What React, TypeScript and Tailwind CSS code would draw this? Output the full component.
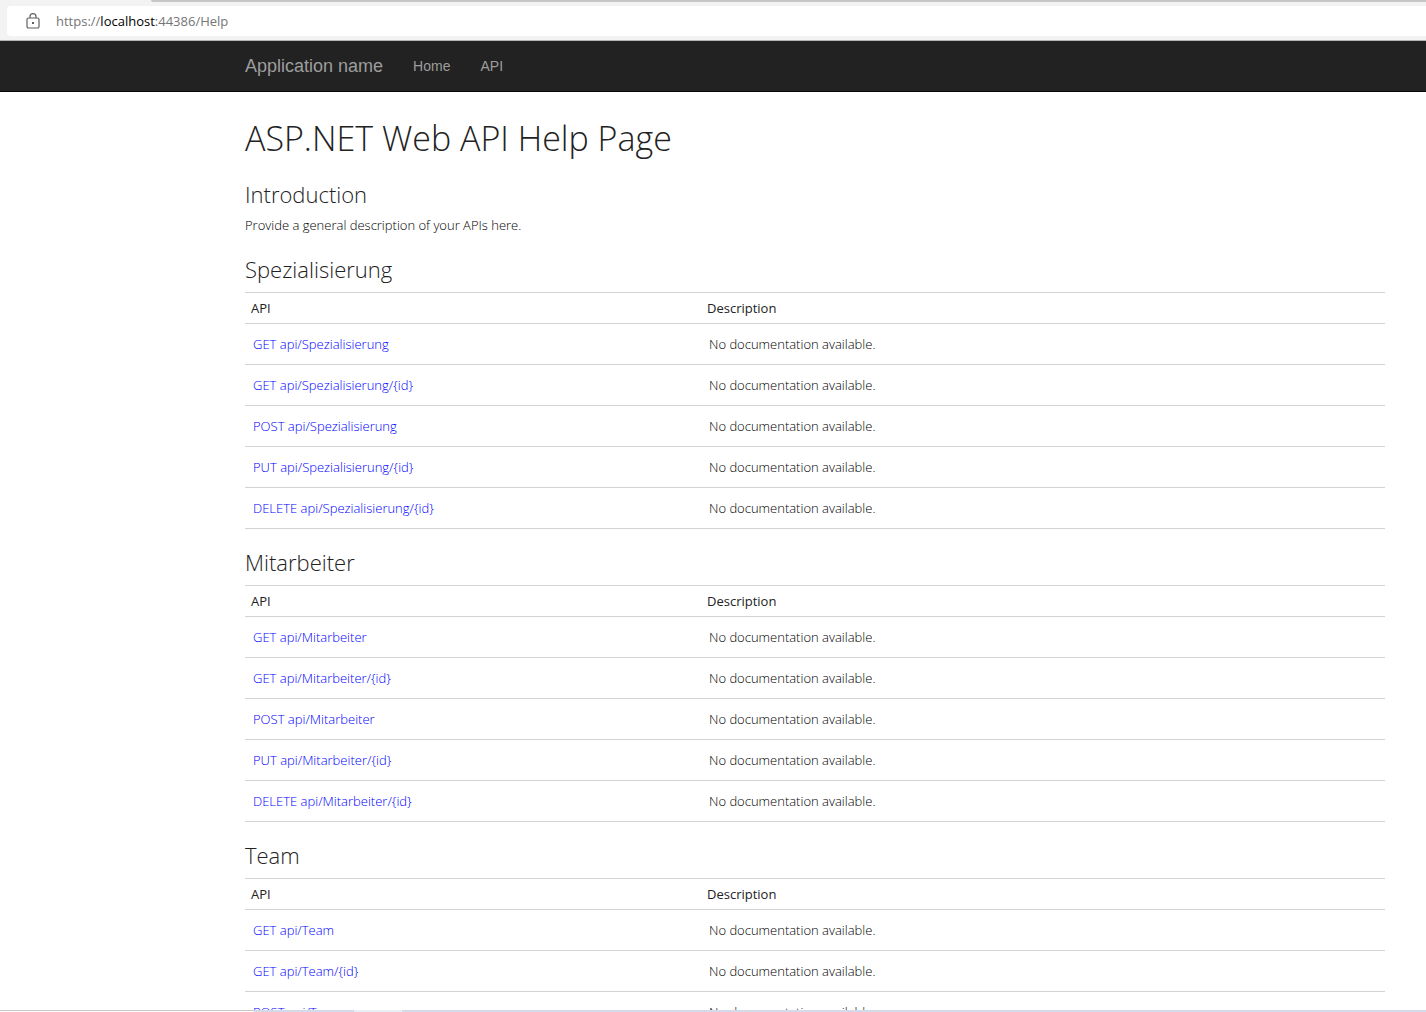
import React from "react";

type ApiGroup = { name: string; slug: string };

const groups: ApiGroup[] = [
  { name: "Spezialisierung", slug: "api/Spezialisierung" },
  { name: "Mitarbeiter", slug: "api/Mitarbeiter" },
  { name: "Team", slug: "api/Team" },
];

function endpoints(slug: string): string[] {
  return [
    `GET ${slug}`,
    `GET ${slug}/{id}`,
    `POST ${slug}`,
    `PUT ${slug}/{id}`,
    `DELETE ${slug}/{id}`,
  ];
}

function LockIcon() {
  return (
    <svg width="14" height="16" viewBox="0 0 14 16" fill="none" stroke="#5f5f5f" strokeWidth="1.2" aria-hidden="true">
      <rect x="1" y="5" width="12" height="10" rx="1.6" />
      <path d="M4 5V3.6a3 3 0 0 1 6 0V5" />
      <rect x="6" y="9" width="2" height="2" fill="#5f5f5f" stroke="none" />
    </svg>
  );
}

function BrowserBar() {
  return (
    <div className="shrink-0 border-b border-[#b4b4b4] bg-[#f3f3f3]">
      <div className="flex h-[6px] items-start">
        <div className="w-[151px]" />
        <div className="h-[2px] flex-1 rounded-bl-sm bg-[#c6c6c6]" />
      </div>
      <div className="mb-1 ml-[7px] flex h-[30px] items-center rounded-l bg-white pl-[19px]">
        <LockIcon />
        <div className="ml-4 text-[13px] leading-5 text-[#757575]">
          https://<span className="text-black">localhost</span>:44386/Help
        </div>
      </div>
    </div>
  );
}

function ApiTable({ group }: { group: ApiGroup }) {
  return (
    <section>
      <h2 className="mt-[20px] mb-[10px] text-[22px] leading-[26px] font-light">{group.name}</h2>
      <table className="w-full table-fixed border-collapse border-y border-[#d3d3d3] text-left text-[13px] leading-5">
        <thead>
          <tr>
            <th className="w-2/5 px-[6px] py-[5px] font-normal">API</th>
            <th className="px-[6px] py-[5px] font-normal">Description</th>
          </tr>
        </thead>
        <tbody>
          {endpoints(group.slug).map((e) => (
            <tr key={e} className="border-t border-[#d3d3d3]">
              <td className="px-2 py-[10px] font-light">
                <a href="#" className="text-[#0000ff]">{e}</a>
              </td>
              <td className="px-2 py-[10px] font-light text-black">No documentation available.</td>
            </tr>
          ))}
        </tbody>
      </table>
    </section>
  );
}

export default function App() {
  return (
    <div className="flex h-screen flex-col bg-white font-['Open_Sans',sans-serif] text-[#222222]">
      <BrowserBar />
      <nav className="flex h-[51px] shrink-0 items-center border-b border-[#080808] bg-[#222222] pl-[245px] font-['Liberation_Sans',Arial,sans-serif] text-[14px] leading-5 text-[#9d9d9d]">
        <a href="#" className="text-[18px]">Application name</a>
        <a href="#" className="ml-[30px]">Home</a>
        <a href="#" className="ml-[30px]">API</a>
      </nav>
      <main className="min-h-0 flex-1 overflow-y-auto pr-[41px] pl-[245px] [scrollbar-width:none]">
        <h1 className="mt-[26px] text-[34px] leading-[40px] font-light">ASP.NET Web API Help Page</h1>
        <h2 className="mt-[23px] mb-[8px] text-[22px] leading-[26px] font-light">Introduction</h2>
        <p className="mb-[21px] text-[13px] leading-5 font-light text-black">Provide a general description of your APIs here.</p>
        {groups.map((g) => (
          <ApiTable key={g.name} group={g} />
        ))}
      </main>
      <div className="flex h-[2px] shrink-0">
        <div className="w-[254px] border-t border-[#c8c8c8]" />
        <div className="w-[100px] bg-[#d3daea]" />
        <div className="w-[48px] bg-[#e9eff6]" />
        <div className="flex-1 bg-[#d3daea]" />
      </div>
    </div>
  );
}
